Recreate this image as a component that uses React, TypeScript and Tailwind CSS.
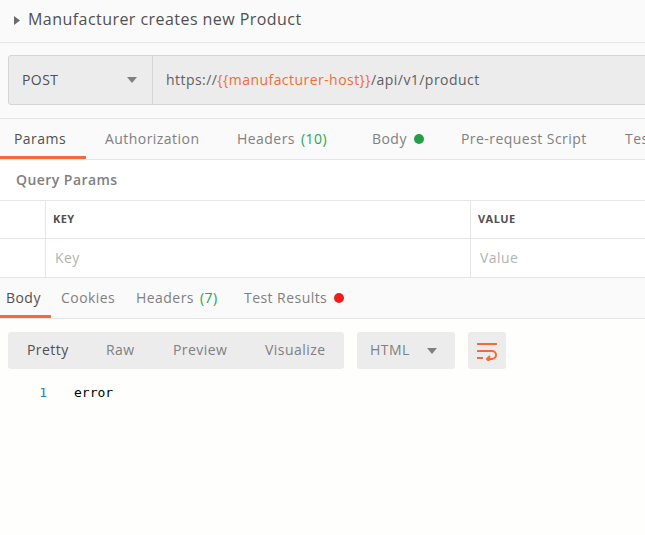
import React from "react";

const Caret = ({ className = "" }: { className?: string }) => (
  <svg width="10" height="6" viewBox="0 0 10 6" className={className}>
    <path d="M0 0 L10 0 L5 6 Z" fill="currentColor" />
  </svg>
);

const WrapIcon = () => (
  <svg width="22" height="20" viewBox="0 0 22 20" fill="none" stroke="#f26b3a" strokeWidth="2">
    <path d="M1 3 H21" />
    <path d="M1 10 H16 a4 4 0 0 1 0 8 H11" />
    <path d="M1 17 H7" />
    <path d="M14 15 L11 18 L14 21" />
  </svg>
);

export default function App() {
  return (
    <div
      className="w-[645px] h-[535px] overflow-hidden bg-[#fefefd] text-[#505050] tracking-[0.45px]"
      style={{ fontFamily: '"Open Sans", "Noto Sans", sans-serif' }}
    >
      {/* title */}
      <div className="h-[43px] bg-[#fafafa] border-b border-[#e6e6e6] flex items-center pl-[14px]">
        <svg width="6" height="9" viewBox="0 0 6 9" className="mr-[8px] mt-[-1px]">
          <path d="M0 0 L6 4.5 L0 9 Z" fill="#6b6b6b" />
        </svg>
        <span className="text-[16px] text-[#505050] mt-[-5px]">Manufacturer creates new Product</span>
      </div>

      {/* request bar */}
      <div className="bg-[#fafafa] pt-[12px] pb-[13px] pl-[8px] overflow-hidden">
        <div className="w-[700px] h-[50px] flex bg-[#ececec] border border-[#d4d4d4] rounded-l-[3px]">
          <div className="w-[144px] shrink-0 flex items-center justify-between pl-[13px] pr-[15px] border-r border-[#d4d4d4] text-[14px] text-[#505050] pb-[2px]">
            <span>POST</span>
            <Caret className="text-[#808080] mt-[2px]" />
          </div>
          <div className="flex items-center pl-[13px] text-[14px] text-[#606060] pb-[2px]">
            <span>https://</span>
            <span className="text-[#f26b3a]">{"{{manufacturer-host}}"}</span>
            <span>/api/v1/product</span>
          </div>
        </div>
      </div>

      {/* request tabs */}
      <div className="h-[42px] bg-[#fafafa] border-y border-[#e6e6e6] flex text-[14px] whitespace-nowrap">
        <div className="relative w-[86px] shrink-0 flex items-center pl-[14px] pb-[2px] text-[#505050]">
          Params
          <div className="absolute left-0 right-0 bottom-0 h-[3px] bg-[#f26b3a]" />
        </div>
        <div className="flex shrink-0 items-center pl-[19px] pb-[2px] w-[151px] text-[#808080]">Authorization</div>
        <div className="flex shrink-0 items-center pb-[2px] w-[135px] text-[#808080]">
          Headers<span className="ml-[6px] text-[#26a453]">(10)</span>
        </div>
        <div className="flex shrink-0 items-center pb-[2px] w-[89px] text-[#808080]">
          Body<span className="ml-[7px] mt-[2px] inline-block w-[10px] h-[10px] rounded-full bg-[#23a047]" />
        </div>
        <div className="flex shrink-0 items-center pb-[2px] w-[164px] text-[#808080]">Pre-request Script</div>
        <div className="flex shrink-0 items-center pb-[2px] text-[#808080]">Tests</div>
      </div>

      {/* query params */}
      <div className="h-[41px] bg-white border-b border-[#e6e6e6] flex items-center pl-[16px] pb-[2px] text-[14px] font-semibold text-[#808080]">
        Query Params
      </div>
      <div className="h-[38px] bg-white border-b border-[#e6e6e6] flex">
        <div className="w-[46px] shrink-0 border-r border-[#e6e6e6]" />
        <div className="w-[425px] shrink-0 border-r border-[#e6e6e6] flex items-center pl-[7px] pb-[1px] text-[11px] font-bold text-[#505050]">
          KEY
        </div>
        <div className="flex items-center pl-[7px] pb-[1px] text-[11px] font-bold text-[#505050]">VALUE</div>
      </div>
      <div className="h-[39px] bg-white border-b border-[#e6e6e6] flex text-[14px] text-[#b3b3b3]">
        <div className="w-[46px] shrink-0 border-r border-[#e6e6e6]" />
        <div className="w-[425px] shrink-0 border-r border-[#e6e6e6] flex items-center pl-[9px] pb-[2px]">Key</div>
        <div className="flex items-center pl-[9px] pb-[2px]">Value</div>
      </div>

      {/* response tabs */}
      <div className="h-[41px] bg-[#fafafa] border-b border-[#e6e6e6] flex text-[14px] whitespace-nowrap">
        <div className="relative w-[51px] shrink-0 flex items-center pl-[6px] pb-[2px] text-[#505050]">
          Body
          <div className="absolute left-0 right-0 bottom-0 h-[3px] bg-[#f26b3a]" />
        </div>
        <div className="flex shrink-0 items-center pl-[10px] pb-[2px] w-[85px] text-[#808080]">Cookies</div>
        <div className="flex shrink-0 items-center pb-[2px] w-[108px] text-[#808080]">
          Headers<span className="ml-[6px] text-[#26a453]">(7)</span>
        </div>
        <div className="flex shrink-0 items-center pb-[2px] text-[#808080]">
          Test Results<span className="ml-[7px] mt-[2px] inline-block w-[10px] h-[10px] rounded-full bg-[#ef1c1c]" />
        </div>
      </div>

      {/* response toolbar */}
      <div className="flex items-center pt-[13px] pl-[8px] gap-[13px] text-[14px]">
        <div className="h-[37px] w-[336px] shrink-0 bg-[#ececec] rounded-[3px] flex items-center pb-[2px] text-[#808080]">
          <span className="pl-[19px] w-[98px] text-[#505050]">Pretty</span>
          <span className="w-[67px]">Raw</span>
          <span className="w-[92px]">Preview</span>
          <span>Visualize</span>
        </div>
        <div className="h-[37px] w-[98px] shrink-0 bg-[#ececec] rounded-[3px] flex items-center justify-between pl-[13px] pr-[18px] pb-[2px] text-[#808080]">
          <span>HTML</span>
          <Caret className="text-[#808080] mt-[2px]" />
        </div>
        <div className="h-[37px] w-[38px] shrink-0 bg-[#ececec] rounded-[3px] flex items-center justify-center">
          <WrapIcon />
        </div>
      </div>

      {/* code */}
      <div
        className="flex items-center pt-[14px] text-[13px] tracking-normal"
        style={{ fontFamily: '"DejaVu Sans Mono", "Liberation Mono", monospace' }}
      >
        <span className="w-[47px] text-right text-[#2f7bb0]">1</span>
        <span className="ml-[27px] text-[#000000]">error</span>
      </div>
    </div>
  );
}
